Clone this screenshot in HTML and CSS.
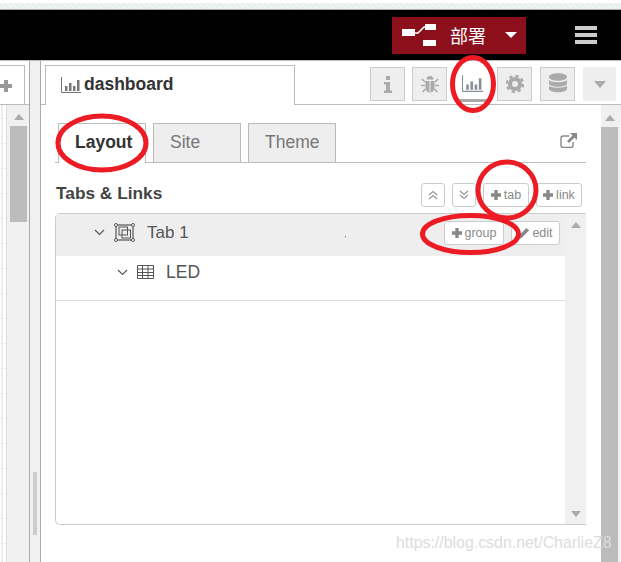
FILE: index.html
```html
<!DOCTYPE html>
<html lang="zh">
<head>
<meta charset="utf-8">
<title>Node-RED dashboard</title>
<link rel="stylesheet" href="styles.css">
</head>
<body>
<div class="page">
  <div class="strip"></div>
  <header class="topbar">
    <div class="deploy">
      <svg class="deploy-icon" width="34" height="22" viewBox="0 0 34 22"><rect x="0" y="5" width="13" height="7" fill="#fff"/><path d="M13 9 H16 L22 3 H24" fill="none" stroke="#fff" stroke-width="1.6"/><rect x="23" y="0" width="11" height="6" fill="#fff"/><rect x="21" y="16" width="13" height="6" fill="#fff"/></svg>
      <span class="deploy-label">部署</span>
      <svg class="deploy-caret" width="12" height="6" viewBox="0 0 12 6"><path d="M0 0H12L6 6Z" fill="#fff"/></svg>
    </div>
    <div class="burger"><span></span><span></span><span></span></div>
  </header>
  <main class="main">
    <aside class="left">
      <div class="left-tabs"><div class="left-tab"><svg width="12" height="12" viewBox="0 0 12 12"><path d="M4 0H8V4H12V8H8V12H4V8H0V4H4Z" fill="#999"/></svg></div></div>
      <div class="left-body">
        <div class="canvas"></div>
        <div class="left-scroll"><span class="arrow-up"></span><div class="left-thumb"></div></div>
      </div>
    </aside>
    <div class="sep"><div class="sep-thumb"></div></div>
    <section class="panel">
      <div class="panel-tabs">
        <div class="panel-tab">
          <svg width="20" height="16" viewBox="0 0 20 16"><path d="M.5 0V15.5H20" fill="none" stroke="#777"/><path d="M4 9h2.500v5H4zM8 6h2.500v8H8zM12 9h2.500v5H12zM16 3h2.500v11H16z" fill="#777"/></svg>
          <span>dashboard</span>
        </div>
        <div class="tool-group">
          <div class="tool"><svg width="10" height="17" viewBox="0 0 10 17"><path d="M3 0h4v4H3zM1 6h6v8.500h2V17H1v-2.500h2V8.500H1z" fill="#aaa"/></svg></div>
          <div class="tool"><svg width="18" height="18" viewBox="0 0 18 18"><path d="M5.500 4.500a3.500 3.500 0 0 1 7 0zM4.500 6h9v7a4.500 4.500 0 0 1-9 0z" fill="#aaa"/><path d="M4 7L1 4M14 7l3-3M4 10.500H0M14 10.500h4M4.500 14L1.500 17M13.500 14l3 3" stroke="#aaa" stroke-width="1.600"/><path d="M9 6v11" stroke="#eee"/></svg></div>
          <div class="tool tool-active"><svg width="21" height="17" viewBox="0 0 20 16"><path d="M.5 0V15.500H20" fill="none" stroke="#8a8f99"/><path d="M4 9h2.500v5H4zM8 6h2.500v8H8zM12 9h2.500v5H12zM16 3h2.500v11H16z" fill="#8a8f99"/></svg></div>
          <div class="tool"><svg width="18" height="18" viewBox="0 0 18 18"><circle cx="9" cy="9" r="5" fill="none" stroke="#aaa" stroke-width="4"/><circle cx="9" cy="9" r="8" fill="none" stroke="#aaa" stroke-width="2.400" stroke-dasharray="3.300 3"/></svg></div>
          <div class="tool tool-db"><svg width="18" height="22" viewBox="0 0 18 22"><path d="M0 4c0-5 18-5 18 0s-18 5-18 0zM0 7c3 3 15 3 18 0v3c0 5-18 5-18 0zM0 12.500c3 3 15 3 18 0v3c0 5-18 5-18 0z" fill="#aaa"/></svg></div>
          <div class="tool tool-plain"><svg width="12" height="7" viewBox="0 0 12 7"><path d="M0 0H12L6 7Z" fill="#aaa"/></svg></div>
        </div>
      </div>
      <div class="panel-body">
        <div class="content">
          <div class="subtabs">
            <div class="subtab subtab-on">Layout</div>
            <div class="subtab">Site</div>
            <div class="subtab">Theme</div>
            <svg class="open-icon" width="17" height="15" viewBox="0 0 17 15"><path d="M9 3H3a2 2 0 0 0-2 2v7.500a2 2 0 0 0 2 2h8a2 2 0 0 0 2-2V9" fill="none" stroke="#888" stroke-width="1.400"/><path d="M5.500 10L12 3.500M10 0h7v7L14.500 4.500 9 10 7 8l5.500-5.500z" fill="#888"/></svg>
          </div>
          <div class="section-head">
            <h2 class="section-title">Tabs &amp; Links</h2>
            <div class="btn-row">
              <div class="btn btn-square"><svg width="10" height="10" viewBox="0 0 10 10"><path d="M1 5L5 1.500 9 5M1 9L5 5.500 9 9" fill="none" stroke="#999" stroke-width="1.300"/></svg></div>
              <div class="btn btn-square"><svg width="10" height="10" viewBox="0 0 10 10"><path d="M1 1L5 4.500 9 1M1 5L5 8.500 9 5" fill="none" stroke="#999" stroke-width="1.300"/></svg></div>
              <div class="btn btn-add"><svg class="plus" width="10" height="10" viewBox="0 0 12 12"><path d="M4 0H8V4H12V8H8V12H4V8H0V4H4Z" fill="#888"/></svg>tab</div>
              <div class="btn btn-add"><svg class="plus" width="10" height="10" viewBox="0 0 12 12"><path d="M4 0H8V4H12V8H8V12H4V8H0V4H4Z" fill="#888"/></svg>link</div>
            </div>
          </div>
          <div class="list">
            <div class="list-main">
              <div class="row row-tab">
                <svg class="chev" width="11" height="7" viewBox="0 0 11 7"><path d="M1 1L5.500 5.500 10 1" fill="none" stroke="#555" stroke-width="1.200"/></svg>
                <svg class="tab-icon" width="21" height="19" viewBox="0 0 21 19"><rect x="2" y="2" width="17" height="15" fill="none" stroke="#555" stroke-width="1.200"/><rect x="5" y="4" width="8.500" height="8" fill="none" stroke="#555"/><rect x="8" y="7" width="8.500" height="8" fill="none" stroke="#555"/><circle cx="2" cy="2" r="1.500" fill="#fff" stroke="#555"/><circle cx="19" cy="2" r="1.500" fill="#fff" stroke="#555"/><circle cx="2" cy="17" r="1.500" fill="#fff" stroke="#555"/><circle cx="19" cy="17" r="1.500" fill="#fff" stroke="#555"/></svg>
                <span class="row-label">Tab 1</span>
                <div class="row-actions">
                  <div class="btn btn-group"><svg class="plus" width="10" height="10" viewBox="0 0 12 12"><path d="M4 0H8V4H12V8H8V12H4V8H0V4H4Z" fill="#888"/></svg>group</div>
                  <div class="btn btn-edit"><svg class="plus" width="12" height="12" viewBox="0 0 10 10"><path d="M0 10L.8 7 7 .8 9.200 3 3 9.200z" fill="#888"/></svg>edit</div>
                </div>
              </div>
              <div class="row row-group">
                <svg class="chev" width="11" height="7" viewBox="0 0 11 7"><path d="M1 1L5.500 5.500 10 1" fill="none" stroke="#555" stroke-width="1.200"/></svg>
                <svg class="grid-icon" width="17" height="14" viewBox="0 0 17 14"><path d="M.5.500h16v13H.5zM.5 4h16M.5 7.500h16M.5 10.500h16M5.500.500v13M11 .5v13" fill="none" stroke="#555"/></svg>
                <span class="row-label row-label-led">LED</span>
              </div>
            </div>
            <div class="list-scroll"><span class="arrow-up"></span><span class="arrow-down"></span></div>
          </div>
        </div>
        <div class="right-scroll"><span class="arrow-up"></span><div class="right-thumb"></div></div>
      </div>
    </section>
  </main>
  <svg class="marks" width="621" height="562" viewBox="0 0 621 562">
    <ellipse cx="473" cy="84" rx="20.500" ry="26.500"/>
    <ellipse cx="102" cy="143" rx="44" ry="27"/>
    <ellipse cx="507" cy="190" rx="29" ry="28"/>
    <ellipse cx="470.500" cy="234" rx="48" ry="18.500"/>
    <rect class="speck" x="345" y="236" width="1" height="1"/>
  </svg>
  <div class="watermark">https://blog.csdn.net/CharlieZ8</div>
</div>
</body>
</html>
```
FILE: styles.css
```css
* { box-sizing: border-box; }
html, body { margin: 0; padding: 0; }
body { font-family: "Liberation Sans", Arial, sans-serif; color: #444; background: #fff; }
.page { position: relative; width: 621px; height: 562px; overflow: hidden; display: flex; flex-direction: column; }

.strip {
  height: 10px; flex: none;
  border-top: 3px solid #fff;
  border-bottom: 1px solid #aaa;
  background: repeating-linear-gradient(45deg, #f1f4f4 0 2px, #e9eeee 2px 4px);
}
.topbar { height: 51px; flex: none; background: #000; display: flex; align-items: center; justify-content: flex-end; border-bottom: 1px solid #bbb; padding-right: 24px; }
.deploy { width: 134px; height: 37px; background: #8c101c; display: flex; align-items: center; color: #fff; padding-left: 10px; }
.deploy-icon { flex: none; }
.deploy-label { font-family: "Noto Sans CJK SC", "Liberation Sans", sans-serif; font-size: 18px; margin-left: 14px; width: 38px; }
.deploy-caret { margin-left: 17px; flex: none; }
.burger { width: 22px; margin-left: 49px; display: flex; flex-direction: column; gap: 3.5px; }
.burger span { display: block; height: 3.5px; background: #ccc; }

.main { flex: 1; display: flex; min-height: 0; }

.left { width: 30px; flex: none; display: flex; flex-direction: column; border-right: 1px solid #aaa; }
.left-tabs { height: 44px; flex: none; border-bottom: 1px solid #bbb; padding-top: 4px; }
.left-tab { width: 25px; height: 40px; border: 1px solid #bbb; border-left: 0; background: #fff; display: flex; align-items: center; padding-top: 1px; }
.left-body { flex: 1; display: flex; min-height: 0; }
.canvas { width: 7px; flex: none; background-color: #fff; background-image: linear-gradient(#eee 1px, transparent 1px), linear-gradient(90deg, #eee 2px, transparent 2px); background-size: 25px 25px, 25px 25px; background-position: 0 13px, 1px 0; border-right: 1px solid #ddd; }
.left-scroll { flex: 1; background: #f0f0f0; padding: 9px 2px 0 3px; display: flex; flex-direction: column; align-items: center; }
.left-thumb { width: 17px; height: 96px; background: #bcbcbc; margin-top: 6px; }

.sep { width: 11px; flex: none; background: #f0f0f0; border-right: 1px solid #aaa; padding: 411px 0 0 3px; }
.sep-thumb { width: 4px; height: 63px; background: #ccc; }

.panel { flex: 1; min-width: 0; display: flex; flex-direction: column; }
.panel-tabs { height: 44px; flex: none; border-bottom: 1px solid #bbb; display: flex; padding: 4px 5px 0 4px; justify-content: space-between; }
.panel-tab { width: 250px; height: 40px; border: 1px solid #bbb; border-bottom: 0; background: #fff; display: flex; align-items: center; padding: 0 0 2px 15px; gap: 3px; font-size: 17.5px; font-weight: bold; color: #333; }
.tool-group { display: flex; gap: 7px; padding-top: 2px; }
.tool { width: 35px; height: 34px; background: #eee; border: 1px solid #ccc; display: flex; align-items: center; justify-content: center; }
.tool-active { background: #fff; border: 0; border-bottom: 3px solid #aaa; height: 35px; margin-left: 1px; }
.tool-db { margin-left: 1px; }
.tool-plain { border: 0; width: 33px; margin-left: 1px; }

.panel-body { flex: 1; display: flex; min-height: 0; }
.content { flex: 1; min-width: 0; padding: 18px 15px 0 14px; }
.subtabs { height: 40px; border-bottom: 1px solid #bbb; display: flex; gap: 7px; padding-left: 3px; align-items: flex-start; }
.subtab { width: 88px; height: 39px; background: #eee; border: 1px solid #bbb; border-bottom: 0; display: flex; align-items: center; padding: 0 0 1px 16px; font-size: 17.5px; color: #777; }
.subtab-on { background: #fff; font-weight: bold; color: #333; height: 40px; padding-bottom: 2px; }
.open-icon { margin-left: auto; margin-top: 10px; margin-right: 9px; }

.section-head { height: 50px; display: flex; align-items: center; justify-content: space-between; padding-top: 14px; margin-right: 4px; }
.section-title { margin: 0 0 4px; font-size: 17.3px; font-weight: bold; color: #444; padding-left: 1px; }
.btn-row { display: flex; gap: 7px; }
.btn { height: 24px; border: 1px solid #ccc; border-radius: 3px; background: #fff; display: flex; align-items: center; justify-content: center; gap: 3px; font-size: 12.5px; color: #888; }
.btn-square { width: 24px; }
.btn-add { width: 46px; }
.btn-group { width: 60px; }
.btn-edit { width: 49px; gap: 2px; }
.plus { flex: none; }

.list { height: 312px; border: 1px solid #ccc; border-right: 0; border-radius: 5px 0 0 5px; display: flex; }
.list-main { flex: 1; min-width: 0; }
.row { display: flex; align-items: center; color: #555; }
.row-tab { height: 42px; background: #eee; padding: 0 0 5px 38px; }
.row-tab .tab-icon { margin-left: 9px; }
.row-tab .row-label { margin-left: 12px; }
.row-group { height: 45px; padding: 0 0 12px 61px; border-bottom: 1px solid #ddd; }
.row-group .grid-icon { margin-left: 9px; }
.row-group .row-label { margin-left: 12px; }
.row-label { font-size: 17px; }
.row-label-led { font-size: 17.5px; }
.row-actions { margin-left: auto; display: flex; gap: 7px; margin-right: 5px; }
.list-scroll { width: 21px; flex: none; background: #f0f0f0; display: flex; flex-direction: column; align-items: center; justify-content: space-between; padding: 8px 0 7px; }

.arrow-up, .arrow-down { display: block; width: 0; height: 0; border-left: 5px solid transparent; border-right: 5px solid transparent; flex: none; }
.arrow-up { border-bottom: 6px solid #aaa; }
.arrow-down { border-top: 6px solid #aaa; }

.right-scroll { width: 20px; flex: none; background: #f0f0f0; display: flex; flex-direction: column; align-items: center; padding: 10px 3px 0 0; }
.right-thumb { width: 17px; flex: 1; margin-top: 6px; background: #bcbcbc; }

.marks { position: absolute; left: 0; top: 0; pointer-events: none; }
.marks ellipse { fill: none; stroke: #ed1c24; stroke-width: 5; }
.marks .speck { fill: #555; }
.watermark { position: absolute; left: 396px; top: 534px; font-size: 15.9px; color: #dcdcdc; white-space: nowrap; }
```
